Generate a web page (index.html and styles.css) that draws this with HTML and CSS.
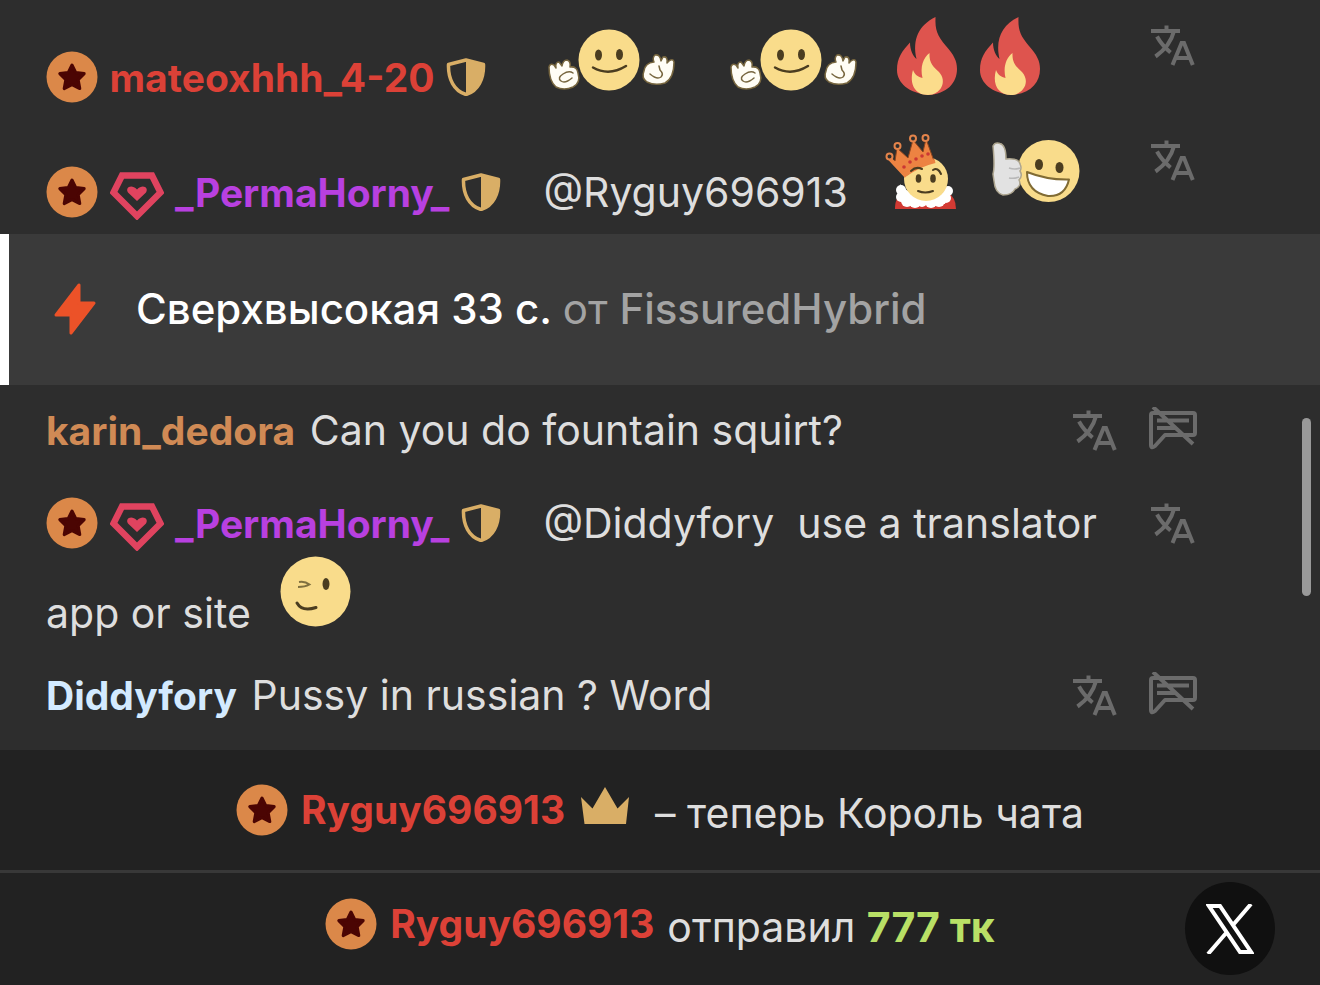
FILE: index.html
```html
<!DOCTYPE html>
<html lang="ru">
<head>
  <meta charset="UTF-8" />
  <meta name="viewport" content="width=device-width, initial-scale=1.0" />
  <title>Чат</title>
  <link rel="stylesheet" href="styles.css">
</head>
<body>
  <!-- Shared icons -->
  <svg class="sprite" aria-hidden="true">
    <symbol id="badge" viewBox="0 0 52 52">
      <circle cx="26" cy="26" r="25.5" fill="#db8849" />
      <path d="M26 14L29.8 21.6L38.2 22.6L32.2 28.8L33.8 37.6L26 33.6L18.2 37.6L19.8 28.8L13.8 22.6L22.2 21.6Z" fill="#4b0503" stroke="#4b0503" stroke-width="3" stroke-linejoin="round" />
    </symbol>
    <symbol id="gem" viewBox="0 0 54 48">
      <path d="M12 3.5H42L50.5 20.5L27 44L3.5 20.5Z" fill="none" stroke="#e0435f" stroke-width="6.5" />
      <path d="M27 29L18 20.5C15 16 21 11.5 27 17.5C33 11.5 39 16 36 20.5Z" fill="#e0435f" />
    </symbol>
    <symbol id="shield" viewBox="0 0 40 38">
      <path d="M20 2L37.5 6.5C38 21 32 33 20 36.5C8 33 2 21 2.5 6.5Z" fill="none" stroke="#d9ae66" stroke-width="3.5" stroke-linejoin="round" />
      <path d="M20 1L38 6C38.5 21 32 34 20 37Z" fill="#d9ae66" />
    </symbol>
    <symbol id="crown" viewBox="0 0 50 37">
      <path d="M1 10L12.5 21.5L25 0L37.5 21.5L49 10L46 37H4.5Z" fill="#d9ae66" />
    </symbol>
    <symbol id="translate" viewBox="0 0 48 48">
      <g fill="none" stroke="currentColor" stroke-width="4">
        <path d="M2 9H31M17.5 3.5V9M25 9C22.5 19 17 27 6.5 34.5M8 14.5C11 20 15 25 21.5 30.5" />
        <path d="M23.5 43L32.6 21H35L43.8 43M27 36H41" />
      </g>
    </symbol>
    <symbol id="mute" viewBox="0 2 48 48">
      <g fill="none" stroke="currentColor" stroke-width="4" stroke-linejoin="round">
        <path d="M4 8H44Q46 8 46 10V28Q46 30 44 30H16L6 41Q2 44 2 40V10Q2 8 4 8Z" />
        <path d="M8 15.5H40M8 23H26M4 2L44 39" />
      </g>
    </symbol>
    <symbol id="hands" viewBox="0 0 128 80">
      <circle cx="62" cy="45" r="30.5" fill="#f9dc8b" />
      <g fill="#4b3d20">
        <ellipse cx="51.5" cy="40" rx="3.5" ry="5.5" />
        <ellipse cx="72.5" cy="39.5" rx="3.5" ry="5.5" />
      </g>
      <path d="M46 52.5Q62 61.5 79 51" fill="none" stroke="#4b3d20" stroke-width="2.5" stroke-linecap="round" />
      <g stroke="#77663f" stroke-width="1.5" stroke-linejoin="round" stroke-linecap="round">
        <path d="M2 52Q3 48 7 50L9 53Q8 47 12 47L15 51Q16 45 20 45Q24 46 23 52Q30 51 31 58Q34 68 26 72Q17 76 9 72Q2 66 2 52Z" fill="#fffdf5" />
        <path d="M25 63Q18 69 14 66Q10 63 16 59Q22 55 26 58" fill="none" />
        <path d="M127 47Q126 43 122 46L120 48Q121 41 116 42L114 46Q113 39 108 40Q105 43 107 47Q98 48 97 56Q94 63 100 67Q108 71 118 68Q127 63 127 47Z" fill="#fffdf5" />
        <path d="M103 59Q110 65 114 62Q117 59 113 55L112 51" fill="none" />
      </g>
    </symbol>
    <symbol id="fire" viewBox="0 0 62 80">
      <path d="M39.5 2C39 15 41 20 50 31C58 40 61 46 61 54C61 68 51 79 32 80C13 78 1 68 1 55C1 43 6 36 14 27.5C14 35 17 41 20.5 44C16 24 23 10 39.5 2Z" fill="#de544e" />
      <path d="M33.5 38C33 49 38 52 43 57C52 67 44 80 32 80C19 80 13 69 17 55C19 60 22 62 26.5 63C24 52 27 43 33.5 38Z" fill="#fbdc8b" />
    </symbol>
    <symbol id="king" viewBox="0 0 72 80">
      <path d="M10 79Q10 65 20 62H62Q71 67 71 79Z" fill="#d23a33" />
      <g fill="#ffffff">
        <circle cx="16" cy="60" r="5" /><circle cx="16" cy="67" r="5" />
        <circle cx="22" cy="71" r="6" /><circle cx="30" cy="72" r="6" />
        <circle cx="37" cy="72" r="5" /><circle cx="46" cy="72" r="6" />
        <circle cx="54" cy="71" r="6" /><circle cx="61" cy="68" r="5" />
        <circle cx="63" cy="61" r="5" />
        <path d="M15 54Q40 80 65 57L60 74H20Z" />
      </g>
      <circle cx="41" cy="49" r="22" fill="#f9dc8b" />
      <path d="M4 28L10 31L12 18L23 28L28 10L38 22L41 9L49 31Q34 35 22 45Z" fill="#ed8342" stroke="#8e451e" stroke-width="1" />
      <path d="M5 29L20 45Q33 35 50 31" fill="none" stroke="#ed8342" stroke-width="4" />
      <g fill="#2d2d2d" stroke="#e4844b" stroke-width="2">
        <circle cx="4.5" cy="26.5" r="3" /><circle cx="12.5" cy="16" r="3" />
        <circle cx="28" cy="8.5" r="3" /><circle cx="40.5" cy="8" r="3" />
      </g>
      <g fill="#cb3733">
        <circle cx="19" cy="37" r="1.8" /><circle cx="25" cy="32" r="1.8" />
        <circle cx="31" cy="29" r="1.8" /><circle cx="37" cy="26" r="1.8" /><circle cx="43" cy="24" r="1.8" />
      </g>
      <g fill="#4b3d20">
        <ellipse cx="33.5" cy="48.5" rx="2.8" ry="4.3" />
        <ellipse cx="48" cy="48.5" rx="2.8" ry="4.3" />
      </g>
      <path d="M26 41Q31 36 37 39M48 40Q53 37 56 44M33 61Q40 64 48 61" fill="none" stroke="#4b3d20" stroke-width="2" stroke-linecap="round" />
    </symbol>
    <symbol id="thumb" viewBox="0 0 90 80">
      <circle cx="57.5" cy="41" r="31" fill="#f9dc8b" />
      <g fill="#4b3d20">
        <ellipse cx="48" cy="34.5" rx="4" ry="5.5" />
        <ellipse cx="68.5" cy="37.5" rx="4" ry="5.5" />
      </g>
      <path d="M36 42Q56 50 78 49.5Q74 67 57 66Q36 62 36 42Z" fill="#ffffff" stroke="#806b34" stroke-width="2" stroke-linejoin="round" />
      <path d="M2 16Q4 12 9 13.5Q15 15 15 29Q28 28 29 34Q31 38 29 41Q32 46 28 50Q31 56 24 59Q21 65 12 65Q4 63 3 51L2 44Q4 37 2 16Z" fill="#e2e2e2" stroke="#ada58f" stroke-width="1.5" />
      <path d="M18 38Q24 40 29 38M18 48Q23 49 28 47" fill="none" stroke="#b8b8b8" stroke-width="1.5" />
    </symbol>
    <symbol id="wink" viewBox="0 3 72 77">
      <circle cx="35.5" cy="40.5" r="35" fill="#f9dc8b" />
      <ellipse cx="46" cy="33" rx="3.5" ry="6" fill="#4b3d20" />
      <path d="M19 31Q25 30 29.5 33.5Q25 36 18 36" fill="none" stroke="#80703f" stroke-width="2" />
      <path d="M17 52Q22 61 36 56.5" fill="none" stroke="#4b3d20" stroke-width="3" stroke-linecap="round" />
    </symbol>
  </svg>

  <main class="chat">
    <section class="messages">
      <div class="message">
        <div class="message-body">
          <svg class="badge"><use href="#badge" /></svg>
          <b class="name red">mateoxhhh_4-20</b>
          <svg class="shield"><use href="#shield" /></svg>
          <svg class="emoji hands"><use href="#hands" /></svg>
          <svg class="emoji hands"><use href="#hands" /></svg>
          <svg class="emoji fire"><use href="#fire" /></svg>
          <svg class="emoji fire"><use href="#fire" /></svg>
        </div>
        <div class="actions">
          <button type="button" aria-label="Перевести"><svg><use href="#translate" /></svg></button>
        </div>
      </div>
      <div class="message">
        <div class="message-body">
          <svg class="badge"><use href="#badge" /></svg>
          <svg class="gem"><use href="#gem" /></svg>
          <b class="name purple">_PermaHorny_</b>
          <svg class="shield"><use href="#shield" /></svg>
          <span class="text">@Ryguy696913</span>
          <svg class="emoji king"><use href="#king" /></svg>
          <svg class="emoji thumb"><use href="#thumb" /></svg>
        </div>
        <div class="actions">
          <button type="button" aria-label="Перевести"><svg><use href="#translate" /></svg></button>
        </div>
      </div>
    </section>

    <section class="notice">
      <svg class="bolt" viewBox="0 0 42 52">
        <path d="M25 2V20H40L17 50V32H2Z" fill="#ec5228" stroke="#ec5228" stroke-width="3" stroke-linejoin="round" />
      </svg>
      <p>Сверхвысокая 33 с. <span class="from">от <b>FissuredHybrid</b></span></p>
    </section>

    <section class="messages">
      <div class="message">
        <div class="message-body">
          <b class="name orange">karin_dedora</b>
          <span class="plain">Can you do fountain squirt?</span>
        </div>
        <div class="actions">
          <button type="button" aria-label="Перевести"><svg><use href="#translate" /></svg></button>
          <button type="button" aria-label="Заглушить"><svg><use href="#mute" /></svg></button>
        </div>
      </div>
      <div class="message tall">
        <div class="message-body">
          <svg class="badge"><use href="#badge" /></svg>
          <svg class="gem"><use href="#gem" /></svg>
          <b class="name purple">_PermaHorny_</b>
          <svg class="shield"><use href="#shield" /></svg>
          <span class="text">@Diddyfory&nbsp; use a translator</span>
          <span>app or site</span>
          <svg class="emoji wink"><use href="#wink" /></svg>
        </div>
        <div class="actions">
          <button type="button" aria-label="Перевести"><svg><use href="#translate" /></svg></button>
        </div>
      </div>
      <div class="message">
        <div class="message-body">
          <b class="name blue">Diddyfory</b>
          <span class="plain">Pussy in russian ? Word</span>
        </div>
        <div class="actions">
          <button type="button" aria-label="Перевести"><svg><use href="#translate" /></svg></button>
          <button type="button" aria-label="Заглушить"><svg><use href="#mute" /></svg></button>
        </div>
      </div>
      <div class="scrollbar"></div>
    </section>

    <section class="event">
      <svg class="badge"><use href="#badge" /></svg>
      <b class="name red">Ryguy696913</b>
      <svg class="crown"><use href="#crown" /></svg>
      <span class="event-text">– теперь Король чата</span>
    </section>
    <section class="event tip">
      <svg class="badge"><use href="#badge" /></svg>
      <b class="name red">Ryguy696913</b>
      <span class="event-text">отправил <b class="tokens">777 тк</b></span>
      <a class="x-link" href="#" aria-label="X">
        <svg viewBox="0 0 48 50">
          <path d="M3 2H14L45 48H34Z M45 0L27 21M21 28L2 50" fill="none" stroke="#ffffff" stroke-width="4" />
        </svg>
      </a>
    </section>
  </main>
</body>
</html>
```
FILE: styles.css
```css
* {
  box-sizing: border-box;
}
body {
  margin: 0;
  background-color: #222222;
  color: #dedede;
  font-family: Inter, "Noto Sans", sans-serif;
  font-size: 42px;
  line-height: 60px;
}
.sprite {
  position: absolute;
  width: 0;
  height: 0;
}
.chat {
  min-height: 100vh;
  display: flex;
  flex-direction: column;
}
.messages {
  position: relative;
  background-color: #2d2d2d;
  padding: 4px 0 0;
}
.notice + .messages {
  padding-bottom: 13px;
}
.message {
  display: flex;
  align-items: flex-start;
  padding: 11px 123px 11px 46px;
}
.message.tall {
  padding-top: 21px;
}
.message-body {
  flex: 1;
}
.messages,
.event {
  font-size: 41px;
}
.name {
  font-size: 39px;
  font-weight: 700;
}
.red {
  color: #dc4137;
}
.purple {
  color: #b840e0;
}
.orange {
  color: #d08a55;
}
.blue {
  color: #d3eaff;
}
.tokens {
  color: #b9e066;
  font-weight: 700;
}
.badge {
  width: 52px;
  height: 52px;
  vertical-align: -11px;
}
.gem {
  width: 54px;
  height: 48px;
  vertical-align: -13px;
}
.shield {
  width: 40px;
  height: 38px;
  vertical-align: -4px;
}
.text {
  margin-left: 31px;
}
.plain {
  margin-left: 3px;
}
.emoji {
  height: 80px;
  vertical-align: -3px;
}
.hands {
  width: 128px;
  margin-left: 49px;
}
.hands + .hands {
  margin-left: 43px;
}
.fire {
  width: 62px;
  margin-left: 10px;
}
.hands + .fire {
  margin-left: 27px;
}
.king {
  width: 72px;
  margin-left: 26px;
}
.thumb {
  width: 90px;
  margin-left: 22px;
}
.wink {
  width: 72px;
  height: 77px;
  margin-left: 18px;
}
.actions {
  display: flex;
  gap: 30px;
  padding-top: 7px;
}
.actions button {
  width: 48px;
  height: 48px;
  padding: 0;
  border: none;
  background: none;
  color: #6b6b6b;
  cursor: pointer;
}
.actions svg {
  display: block;
  width: 48px;
  height: 48px;
}
.scrollbar {
  position: absolute;
  top: 33px;
  right: 9px;
  width: 9px;
  height: 178px;
  border-radius: 5px;
  background-color: #999999;
}
.notice {
  display: flex;
  align-items: center;
  gap: 40px;
  padding: 45px 45px 46px;
  border-left: 9px solid #ffffff;
  background-color: #3a3a3a;
  color: #ffffff;
  font-weight: 500;
}
.notice p {
  margin: 0;
}
.bolt {
  width: 42px;
  height: 52px;
}
.from {
  color: #a3a3a3;
  font-weight: 400;
}
.from b {
  font-weight: 500;
}
.event {
  position: relative;
  display: flex;
  align-items: center;
  justify-content: center;
  gap: 13px;
  padding: 27px 20px;
}
.event-text {
  padding-top: 6px;
}
.tip {
  padding: 18px 20px 27px;
  border-top: 3px solid #383838;
}
.crown {
  width: 50px;
  height: 37px;
  margin: 0 12px 10px 2px;
}
.x-link {
  position: absolute;
  top: 9px;
  right: 45px;
  width: 90px;
  height: 93px;
  display: flex;
  align-items: center;
  justify-content: center;
  border-radius: 50%;
  background-color: #101010;
}
.x-link svg {
  width: 48px;
  height: 50px;
}
```
